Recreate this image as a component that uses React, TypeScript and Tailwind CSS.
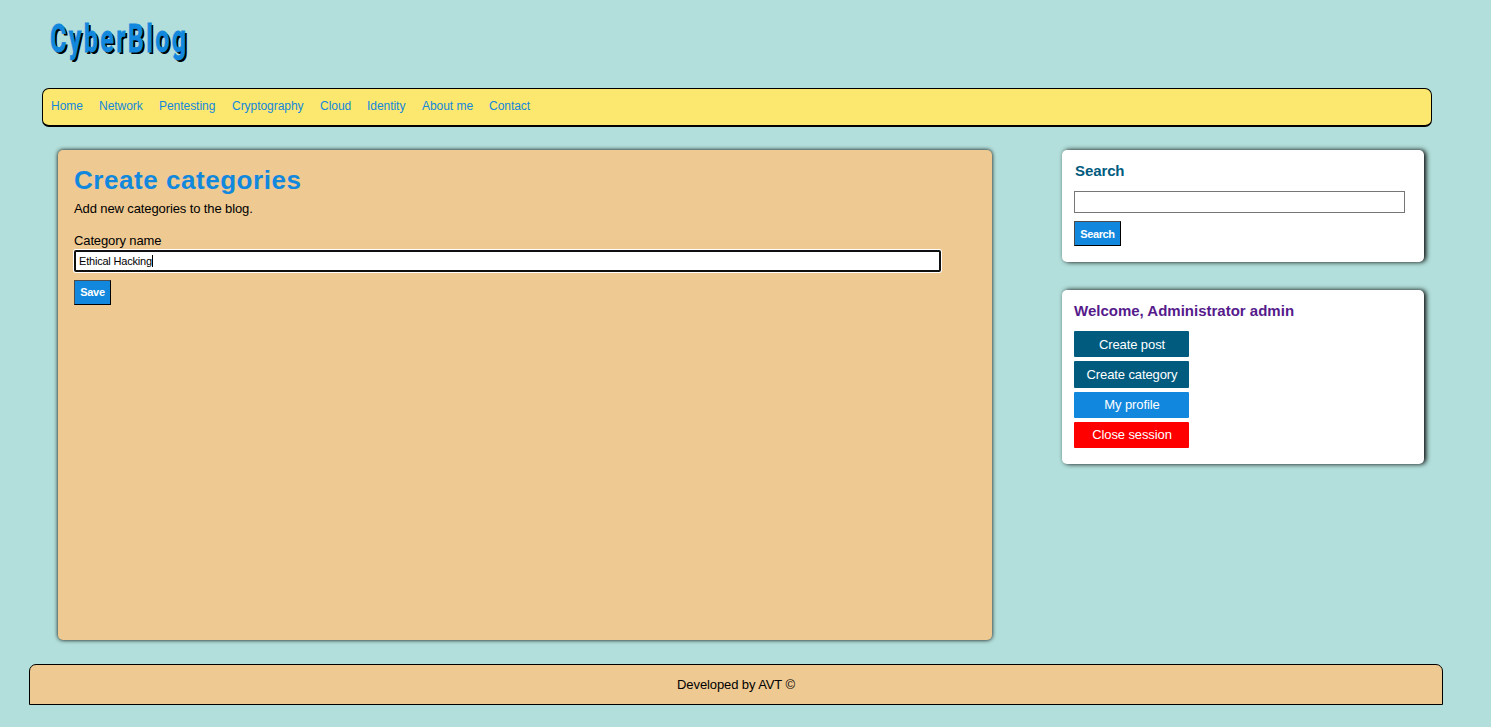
const links = [
  { name: 'Home', width: 'w-[48px]' },
  { name: 'Network', width: 'w-[60px]' },
  { name: 'Pentesting', width: 'w-[73px]' },
  { name: 'Cryptography', width: 'w-[88px]' },
  { name: 'Cloud', width: 'w-[47px]' },
  { name: 'Identity', width: 'w-[55px]' },
  { name: 'About me', width: 'w-[67px]' },
  { name: 'Contact', width: 'w-[60px]' },
];

const actions = [
  { name: 'Create post', style: 'bg-[#005b7f] h-[26px] mb-1 pt-px' },
  { name: 'Create category', style: 'bg-[#005b7f] h-[27px] mb-1' },
  { name: 'My profile', style: 'bg-[#1188dd] h-[26px] mb-1' },
  { name: 'Close session', style: 'bg-[#ff0000] h-[26px]' },
];

function SubmitButton({ label, size }: { label: string; size: string }) {
  return (
    <button
      type="button"
      className={`mt-2 flex h-[25px] items-center justify-center whitespace-nowrap border border-t-[#4c4c4c] border-r-black border-b-black border-l-[#4c4c4c] bg-[#1188dd] text-[11px] font-bold text-white ${size}`}
    >
      {label}
    </button>
  );
}

export default function App() {
  return (
    <div className="flex h-[727px] w-[1491px] flex-col overflow-hidden bg-[#b2dfdb] font-['Liberation_Sans',Arial,sans-serif] text-[13px] text-black">
      <header className="h-[88px] pt-[14px] pl-[50px]">
        <h1 className="w-fit origin-left scale-x-[0.66] font-[Roboto,sans-serif] text-[38px] leading-[50px] font-bold tracking-[3.6px] text-[#1188dd] [-webkit-text-stroke:0.8px_#1188dd] [text-shadow:3px_2px_0.5px_#000]">
          CyberBlog
        </h1>
      </header>

      <nav className="ml-[42px] flex h-[39px] w-[1390px] shrink-0 rounded-[7px] border border-b-2 border-black bg-[#fce76f] pt-[9px] pl-2">
        {links.map((link) => (
          <a key={link.name} href="#" className={`text-[12px] leading-4 tracking-[-0.04px] whitespace-nowrap text-[#1188dd] ${link.width}`}>
            {link.name}
          </a>
        ))}
      </nav>

      <div className="mt-[23px] ml-[58px] flex h-[490px] shrink-0">
        <main className="h-[490px] w-[934px] rounded-[5px] bg-[#eec992] pt-[15px] pl-4 shadow-[0_0_4px_#000]">
          <h2 className="text-[26px] leading-[30px] font-bold tracking-[0.54px] text-[#1188dd]">Create categories</h2>
          <p className="mt-[6px] leading-[15px] tracking-[-0.11px]">Add new categories to the blog.</p>
          <form className="mt-[17px]">
            <label className="block leading-[15px] tracking-[-0.12px]">Category name</label>
            <div className="mt-[2px] flex h-[22px] w-[867px] items-center rounded-[2px] border-2 border-[#101010] bg-white pl-[3px] text-[11px] shadow-[0_0_0_1px_#fff]">
              <span className="tracking-[-0.2px]">Ethical Hacking</span>
              <span className="h-3 w-px bg-black" />
            </div>
            <SubmitButton label="Save" size="w-[37px] tracking-[-0.3px]" />
          </form>
        </main>

        <aside className="ml-[70px] w-[362px]">
          <section className="h-[112px] rounded-[5px] bg-white pt-3 pl-3 shadow-[2px_0_5px_#000]">
            <h3 className="pl-px text-[15px] leading-[17px] font-bold tracking-[-0.1px] text-[#005b7f]">Search</h3>
            <input type="text" className="mt-3 block h-[22px] w-[331px] border border-[#767676] bg-white" />
            <SubmitButton label="Search" size="w-[47px] pt-px tracking-[-0.4px]" />
          </section>
          <section className="mt-7 h-[174px] rounded-[5px] bg-white pt-3 pl-3 shadow-[2px_0_5px_#000]">
            <h3 className="text-[15px] leading-[17px] font-bold text-[#551a8b]">Welcome, Administrator admin</h3>
            <div className="mt-3 w-[115px]">
              {actions.map((action) => (
                <a
                  key={action.name}
                  href="#"
                  className={`flex items-center justify-center rounded-[1px] pl-px text-[13px] tracking-[-0.1px] text-white ${action.style}`}
                >
                  {action.name}
                </a>
              ))}
            </div>
          </section>
        </aside>
      </div>

      <footer className="mt-6 ml-[29px] flex h-[41px] w-[1414px] shrink-0 items-center justify-center rounded-t-[7px] border border-black bg-[#eec992] tracking-[-0.1px]">
        Developed by AVT ©
      </footer>
    </div>
  );
}
